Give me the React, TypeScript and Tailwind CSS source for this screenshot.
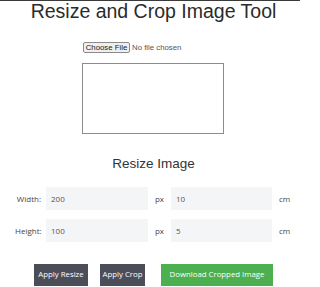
export default function App() {
  return (
    <div className="relative h-[287px] w-[300px] overflow-hidden bg-white">
      <div className="h-px w-full bg-[#3a3a3a]" />
      <div className="flex flex-col items-center pl-[7px]">
        <h1 className="text-[19.5px] leading-[20px] text-[#2b2b2b] [font-family:'Liberation_Sans',Arial,sans-serif]">
          Resize and Crop Image Tool
        </h1>

        <div className="mt-[21px] flex h-[11px] w-[141px] items-center [font-family:'Liberation_Sans',Arial,sans-serif]">
          <label className="flex items-center">
            <span className="flex h-[11px] w-[47px] items-center justify-center rounded-[2px] border border-[#8a8a8a] bg-[#efefef] text-[7.8px] leading-none text-[#222]">
              Choose File
            </span>
            <span className="ml-[2px] text-[7.8px] leading-none text-[#555]">No file chosen</span>
            <input type="file" className="hidden" />
          </label>
        </div>

        <canvas className="mt-[10px] ml-[-1px] block h-[71px] w-[142px] border border-[#8c8c8c] bg-white" />

        <h2 className="mt-[22px] text-[13.5px] leading-[16px] text-[#333] [font-family:'Liberation_Sans',Arial,sans-serif]">
          Resize Image
        </h2>

        <div className="mt-[15px] flex w-[277px] flex-col gap-[9px] text-[8px] text-[#444] [font-family:'Open_Sans',sans-serif]">
          <SizeRow label="Width:" px="200" cm="10" />
          <SizeRow label="Height:" px="100" cm="5" />
        </div>

        <div className="mt-[22px] flex items-center text-[7.8px] text-white [font-family:'Open_Sans',sans-serif]">
          <button className="h-[22px] w-[54px] bg-[#4b4d59]">Apply Resize</button>
          <button className="ml-[12px] h-[22px] w-[45px] bg-[#4b4d59]">Apply Crop</button>
          <button className="ml-[16px] h-[22px] w-[112px] bg-[#4caf50]">Download Cropped Image</button>
        </div>
      </div>
    </div>
  );
}

function SizeRow({ label, px, cm }: { label: string; px: string; cm: string }) {
  return (
    <div className="flex h-[23px] items-center">
      <span className="w-[26px] text-right">{label}</span>
      <input
        readOnly
        value={px}
        className="ml-[5px] h-[23px] w-[102px] bg-[#f4f5f7] px-[5px] text-[8px] text-[#555] outline-none"
      />
      <span className="w-[23px] text-center">px</span>
      <input
        readOnly
        value={cm}
        className="h-[23px] w-[101px] bg-[#f4f5f7] px-[5px] text-[8px] text-[#555] outline-none"
      />
      <span className="pl-[7px]">cm</span>
    </div>
  );
}
